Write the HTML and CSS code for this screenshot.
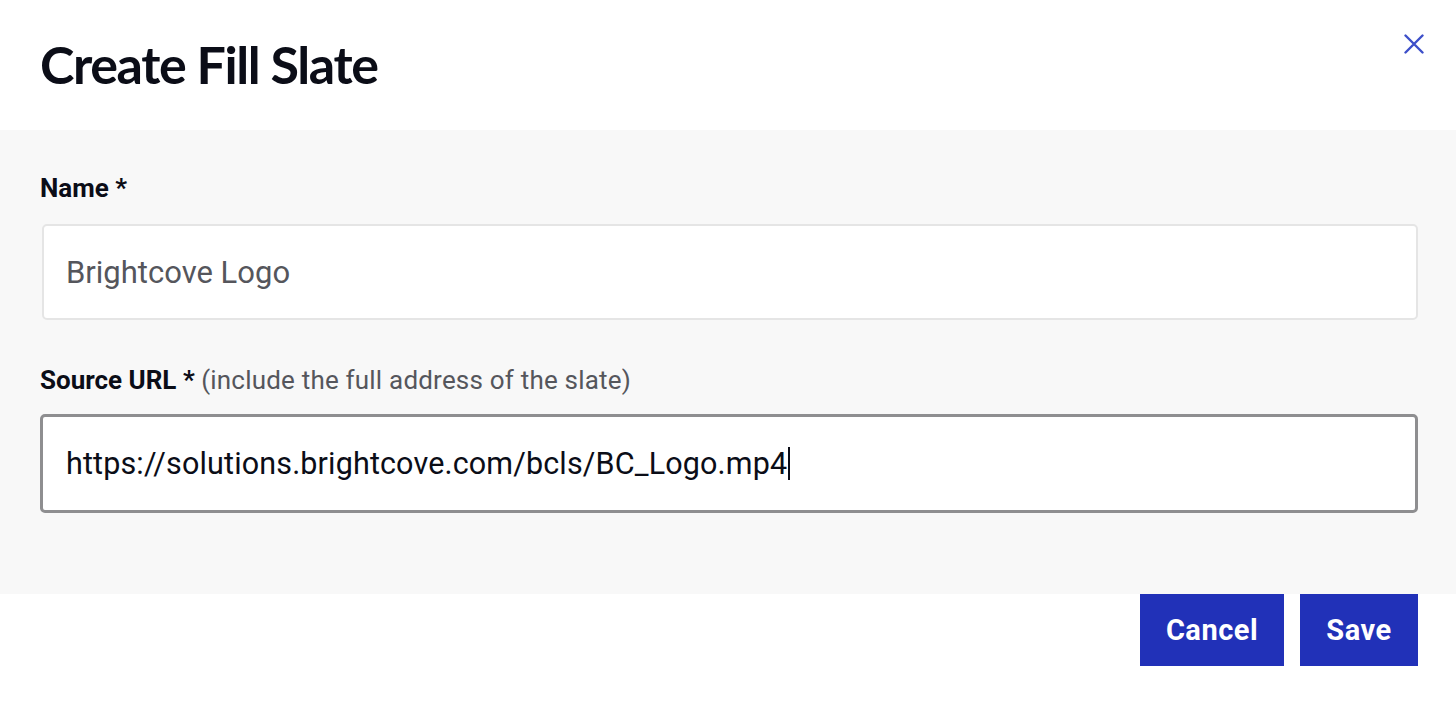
FILE: index.html
```html
<!DOCTYPE html>
<html>
<head>
<meta charset="utf-8">
<link rel="stylesheet" href="styles.css">
</head>
<body>
<div class="modal">
  <header class="modal-header">
    <h1 class="title">Create Fill Slate</h1>
    <button class="close" aria-label="Close">
      <svg width="20" height="20" viewBox="0 0 20 20"><path d="M1.5 1.5L18.5 18.5M18.5 1.5L1.5 18.5" stroke="#3d4fc9" stroke-width="2.4" stroke-linecap="round"/></svg>
    </button>
  </header>
  <section class="modal-body">
    <div class="field">
      <label class="label"><b>Name *</b></label>
      <div class="input input-idle"><span class="value muted">Brightcove Logo</span></div>
    </div>
    <div class="field field-url">
      <label class="label"><b>Source URL *</b> <span class="hint">(include the full address of the slate)</span></label>
      <div class="input input-focus"><span class="value url">https://solutions.brightcove.com/bcls/BC_Logo.mp4</span><span class="caret"></span></div>
    </div>
  </section>
  <footer class="modal-footer">
    <button class="btn btn-cancel">Cancel</button>
    <button class="btn btn-save">Save</button>
  </footer>
</div>
</body>
</html>
```
FILE: styles.css
```css
* { box-sizing: border-box; }
html, body { margin: 0; padding: 0; background: #fff; }
body { font-family: Roboto, "Liberation Sans", sans-serif; color: #0b0d17; width: 1456px; height: 702px; overflow: hidden; }
.modal { display: flex; flex-direction: column; }
.modal-header { height: 130px; display: flex; justify-content: space-between; align-items: flex-start; padding: 0 32px 0 40px; }
.title { margin: 0; padding-top: 34px; font-family: Lato, sans-serif; font-weight: 700; font-size: 52px; letter-spacing: -1.4px; line-height: 60px; color: #0b0d17; }
.close { margin-top: 34px; background: none; border: 0; padding: 0; width: 20px; height: 20px; cursor: pointer; }
.modal-body { background: #f8f8f8; height: 464px; padding: 43px 38px 0 40px; display: flex; flex-direction: column; }
.field { display: flex; flex-direction: column; }
.field-url { margin-top: 45px; }
.label { font-size: 26px; line-height: 30px; color: #0b0d17; }
.label b { font-weight: 700; }
.hint { font-weight: 400; color: #55565c; letter-spacing: 0.2px; }
.input { background: #fff; border-radius: 5px; display: flex; align-items: center; }
.input-idle { margin-top: 21px; margin-left: 2px; height: 96px; border: 2px solid #e5e5e5; padding-left: 22px; }
.input-focus { margin-top: 19px; height: 99px; border: 3px solid #8e8e90; padding-left: 23px; }
.value { font-size: 31px; color: #0b0d17; }
.url { font-size: 30.5px; letter-spacing: 0.15px; }
.muted { color: #55565c; }
.caret { display: inline-block; width: 2px; height: 33px; background: #0b0d17; margin-left: 1px; }
.modal-footer { display: flex; justify-content: flex-end; gap: 16px; padding-right: 38px; }
.btn { height: 72px; background: #2131b8; color: #fff; border: 0; font-family: Roboto, sans-serif; font-weight: 700; font-size: 29px; letter-spacing: 0.5px; padding: 0; cursor: pointer; }
.btn-cancel { width: 144px; }
.btn-save { width: 118px; }
```
